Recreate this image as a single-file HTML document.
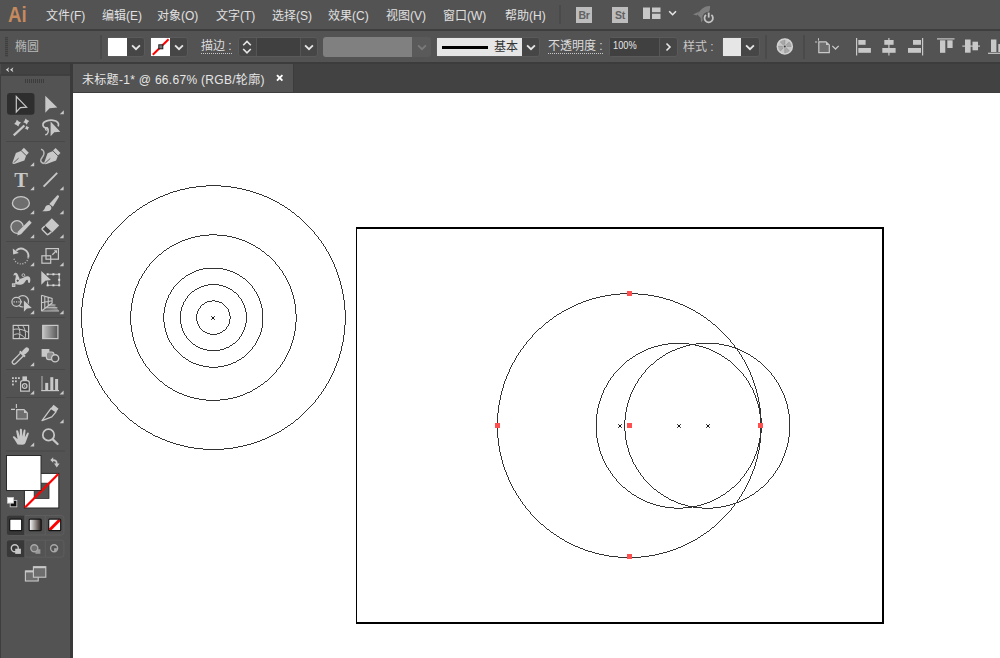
<!DOCTYPE html>
<html lang="zh-CN">
<head>
<meta charset="utf-8">
<title>未标题-1* @ 66.67% (RGB/轮廓)</title>
<style>
*{box-sizing:border-box;margin:0;padding:0}
html,body{width:1000px;height:658px;overflow:hidden;background:#fff}
body{position:relative;font-family:"Liberation Sans","Noto Sans CJK SC",sans-serif;font-size:12px;color:#dcdcdc}
.abs{position:absolute}
#menubar{position:absolute;left:0;top:0;width:1000px;height:29px;background:#535353}
#menusep{position:absolute;left:0;top:29px;width:1000px;height:2px;background:#3e3e3e}
#ctrl{position:absolute;left:0;top:31px;width:1000px;height:31px;background:#535353}
#ctrlsep{position:absolute;left:0;top:62px;width:1000px;height:2px;background:#3c3c3c}
#tools{position:absolute;left:0;top:63px;width:70px;height:595px;background:#535353}
#toolshead{position:absolute;left:0;top:0;width:70px;height:12px;background:#424242}
#gap{position:absolute;left:70px;top:63px;width:3px;height:595px;background:#3a3a3a}
#tabbar{position:absolute;left:73px;top:64px;width:927px;height:29px;background:#424242;border-bottom:1px solid #3e3e3e}
#tab{position:absolute;left:0;top:0;width:221px;height:28px;background:#535353;border-right:1px solid #3c3c3c}
#canvas{position:absolute;left:73px;top:93px;width:927px;height:565px;background:#fff}
.mi{position:absolute;top:6.5px;height:18px;line-height:18px;font-size:12px;color:#e0e0e0;white-space:nowrap}
#logo{position:absolute;left:8px;top:0.5px;font-size:21.5px;line-height:28px;font-weight:bold;color:#c58a5e;transform-origin:0 50%;transform:scaleX(.87)}

.sep{position:absolute;top:4px;width:2px;height:24px;background:#4a4a4a}
.dd{position:absolute;top:6px;height:20px;background:#464646;border:1px solid #5a5a5a}
.sw{position:absolute;top:7px;height:18px}
.lbl{position:absolute;top:6px;line-height:18px;font-size:12px;color:#dcdcdc;white-space:nowrap}
.ul{border-bottom:1px dotted #c8c8c8;line-height:14px;padding-bottom:0}
svg{display:block}
</style>
</head>
<body>
<div id="menubar">
  <div id="logo">Ai</div>
  <div class="mi" style="left:46px">文件(F)</div>
  <div class="mi" style="left:102px">编辑(E)</div>
  <div class="mi" style="left:157px">对象(O)</div>
  <div class="mi" style="left:216px">文字(T)</div>
  <div class="mi" style="left:272px">选择(S)</div>
  <div class="mi" style="left:328px">效果(C)</div>
  <div class="mi" style="left:386px">视图(V)</div>
  <div class="mi" style="left:443px">窗口(W)</div>
  <div class="mi" style="left:505px">帮助(H)</div>
  
<div class="abs" style="left:559px;top:5px;width:2px;height:19px;background:#4a4a4a"></div>
<div class="abs" style="left:576px;top:7px;width:16px;height:16px;background:#bdbdbd;color:#626262;font-size:10.5px;font-weight:bold;line-height:16px;text-align:center;letter-spacing:-0.3px">Br</div>
<div class="abs" style="left:612px;top:7px;width:16px;height:16px;background:#bdbdbd;color:#626262;font-size:10.5px;font-weight:bold;line-height:16px;text-align:center;letter-spacing:-0.3px">St</div>
<svg class="abs" style="left:643px;top:7px" width="18" height="13" viewBox="0 0 18 13"><rect x="0" y="0.5" width="7" height="11.5" fill="#c8c8c8"/><rect x="9" y="0.5" width="8.5" height="4.7" fill="#c8c8c8"/><rect x="9" y="6.7" width="8.5" height="5.3" fill="#c8c8c8"/></svg>
<svg class="abs" style="left:668px;top:10px" width="10" height="7" viewBox="0 0 10 7"><path d="M1.2 1.3 L4.6 4.7 L8 1.3" fill="none" stroke="#e6e6e6" stroke-width="1.6"/></svg>
<svg class="abs" style="left:691px;top:4px" width="24" height="20" viewBox="691 4 24 20"><g fill="#7e7e7e"><path d="M710 6 C710.6 10.5 707.5 15.5 701.6 19 L697.4 14.6 C700.5 9 705.5 5.6 710 6 Z"/><path d="M699.2 11.6 L693 14.4 L697 15.6 Z"/><path d="M704.6 17.4 L701.2 22.4 L700.6 18.6 Z"/></g><circle cx="708.7" cy="18" r="6.3" fill="#535353"/><path d="M706 14.9 A4.2 4.2 0 1 0 711.4 14.9" fill="none" stroke="#c4c4c4" stroke-width="1.8"/><path d="M708.7 12.6 V17.6" stroke="#c4c4c4" stroke-width="1.8"/></svg>

</div>
<div id="menusep"></div>
<div id="ctrl">

<div class="abs" style="left:5px;top:6px;width:3px;height:20px;background:repeating-linear-gradient(#404040 0 1px,#4c4c4c 1px 2px)"></div>
<div class="lbl" style="left:15px;top:6.5px;color:#b8b8b8">椭圆</div>
<div class="sep" style="left:99.5px"></div>
<div class="dd" style="left:107px;width:38px;border-radius:3px"></div>
<div class="sw" style="left:108px;width:19px;background:#fff"></div>
<svg class="abs" style="left:131px;top:13px" width="10" height="7" viewBox="0 0 10 7"><path d="M1.1 1.3 L5 5.2 L8.9 1.3" fill="none" stroke="#e6e6e6" stroke-width="1.8"/></svg>
<div class="dd" style="left:150px;width:38px;border-radius:3px"></div>
<svg class="abs" style="left:151px;top:7px" width="19" height="18" viewBox="0 0 19 18"><rect width="19" height="18" fill="#fff"/><path d="M1.8 16.8 L17.6 1.2" stroke="#f00" stroke-width="2"/><rect x="7.8" y="6.8" width="4" height="4" fill="#777" stroke="#222" stroke-width="1"/></svg>
<svg class="abs" style="left:174px;top:13px" width="10" height="7" viewBox="0 0 10 7"><path d="M1.1 1.3 L5 5.2 L8.9 1.3" fill="none" stroke="#e6e6e6" stroke-width="1.8"/></svg>
<div class="lbl ul" style="left:201px;top:8px">描边 :</div>
<div class="dd" style="left:238px;width:80px;border-radius:3px"></div>
<div class="abs" style="left:256px;top:7px;width:45px;height:18px;background:#404040;border-left:1px solid #555;border-right:1px solid #555"></div>
<svg class="abs" style="left:242px;top:9px" width="10" height="14" viewBox="0 0 10 14"><path d="M1.2 5.2 L5 1.4 L8.8 5.2 M1.2 9 L5 12.8 L8.8 9" fill="none" stroke="#e6e6e6" stroke-width="1.6"/></svg>
<svg class="abs" style="left:304px;top:13px" width="10" height="7" viewBox="0 0 10 7"><path d="M1.1 1.3 L5 5.2 L8.9 1.3" fill="none" stroke="#e6e6e6" stroke-width="1.8"/></svg>
<div class="abs" style="left:323px;top:6px;width:89px;height:20px;background:#808080;border-radius:3px 0 0 3px"></div>
<div class="abs" style="left:412px;top:6px;width:19px;height:20px;background:#5a5a5a;border-radius:0 3px 3px 0"></div>
<svg class="abs" style="left:417px;top:13px" width="10" height="7" viewBox="0 0 10 7"><path d="M1.1 1.3 L5 5.2 L8.9 1.3" fill="none" stroke="#7a7a7a" stroke-width="1.8"/></svg>
<div class="dd" style="left:436px;width:104px;border-radius:3px"></div>
<div class="abs" style="left:437px;top:7px;width:85px;height:18px;background:#e6e6e6"></div>
<div class="abs" style="left:442px;top:14.5px;width:46px;height:3px;background:#000"></div>
<div class="abs" style="left:494px;top:7px;line-height:18px;font-size:12px;color:#333">基本</div>
<svg class="abs" style="left:526px;top:13px" width="10" height="7" viewBox="0 0 10 7"><path d="M1.1 1.3 L5 5.2 L8.9 1.3" fill="none" stroke="#e6e6e6" stroke-width="1.8"/></svg>
<div class="lbl ul" style="left:548px;top:8px">不透明度 :</div>
<div class="dd" style="left:609px;width:69px;border-radius:3px"></div>
<div class="abs" style="left:610px;top:7px;width:50px;height:18px;background:#404040;border-right:1px solid #555"></div>
<div class="abs" style="left:613px;top:6px;line-height:16px;font-size:10.5px;color:#e6e6e6;transform-origin:0 50%;transform:scaleX(.88)">100%</div>
<svg class="abs" style="left:665px;top:11px" width="7" height="10" viewBox="0 0 7 10"><path d="M1.5 1.5 L5 5 L1.5 8.5" fill="none" stroke="#e6e6e6" stroke-width="1.6"/></svg>
<div class="lbl" style="left:683px;top:7px;color:#c8c8c8">样式 :</div>
<div class="dd" style="left:722px;width:38px;border-radius:3px"></div>
<div class="sw" style="left:723px;width:18px;background:#e6e6e6"></div>
<svg class="abs" style="left:745px;top:13px" width="10" height="7" viewBox="0 0 10 7"><path d="M1.1 1.3 L5 5.2 L8.9 1.3" fill="none" stroke="#e6e6e6" stroke-width="1.8"/></svg>
<div class="sep" style="left:765px"></div>
<div class="sep" style="left:803px"></div>

<svg class="abs" style="left:775px;top:6px" width="20" height="20" viewBox="0 0 20 20"><circle cx="9.8" cy="9.4" r="7.6" fill="#a8a8a8"/><g fill="#c6c6c6"><path d="M9.8 9.4 L9.8 1.8 A7.6 7.6 0 0 1 15.2 4 Z"/><path d="M9.8 9.4 L17.4 9.4 A7.6 7.6 0 0 1 15.2 14.8 Z"/><path d="M9.8 9.4 L9.8 17 A7.6 7.6 0 0 1 4.4 14.8 Z"/><path d="M9.8 9.4 L2.2 9.4 A7.6 7.6 0 0 1 4.4 4 Z"/></g><g stroke="#8a8a8a" stroke-width=".6"><path d="M9.8 1.8 V17 M2.2 9.4 H17.4 M4.4 4 L15.2 14.8 M15.2 4 L4.4 14.8"/></g><circle cx="9.8" cy="9.4" r="7.5" fill="none" stroke="#d2d2d2" stroke-width="1.5"/><circle cx="9.8" cy="9.4" r="2" fill="#c0c0c0"/><circle cx="9.8" cy="9.4" r="1" fill="#3a3a3a"/></svg>
<svg class="abs" style="left:814px;top:6px" width="28" height="18" viewBox="814 37 28 18"><path d="M818.5 38.2 V40.6 M815 42 H817.2" stroke="#c8c8c8" stroke-width="1"/><path d="M818.8 41.8 H826 L829.3 45.1 V52.7 H818.8 Z" fill="#6e6e6e" stroke="#c8c8c8" stroke-width="1.2"/><path d="M826 41.8 V45.1 H829.3 Z" fill="#c8c8c8"/><path d="M832.3 45.9 L835.5 49 L838.7 45.9" fill="none" stroke="#c8c8c8" stroke-width="1.3"/></svg>
<svg class="abs" style="left:850px;top:5px" width="150" height="22" viewBox="850 36 150 22" fill="#c8c8c8">
<rect x="856" y="38" width="1.2" height="17.5"/><rect x="858.3" y="40" width="7.3" height="4.8"/><rect x="858.3" y="48" width="12.6" height="4.8"/>
<rect x="888.3" y="38" width="1.2" height="17.5"/><rect x="884.3" y="40" width="9.3" height="4.8"/><rect x="882.3" y="48" width="13.3" height="4.8"/>
<rect x="922" y="38" width="1.2" height="17.5"/><rect x="913" y="40" width="8" height="4.8"/><rect x="908" y="48" width="13" height="4.8"/>
<rect x="937" y="38.3" width="17.5" height="1.2"/><rect x="940" y="40.3" width="5.3" height="12.5"/><rect x="947.3" y="40.3" width="5.3" height="7.7"/>
<rect x="962.3" y="45.5" width="17.7" height="1.2"/><rect x="965" y="39.5" width="5.6" height="13.2"/><rect x="972.5" y="41.7" width="5.5" height="8.6"/>
<rect x="988" y="52.7" width="12" height="1.2"/><rect x="991" y="39.5" width="5.4" height="12.5"/><rect x="998.3" y="44" width="3" height="8"/>
</svg>


</div>
<div id="ctrlsep"></div>
<div id="tools">
  <div id="toolshead"></div>
<!--TOOLS-START-->
<svg class="abs" style="left:0;top:0" width="70" height="595" viewBox="0 63 70 595">
<defs>
<path id="tri" d="M0 -4 V0 H-4 Z" fill="#c8c8c8"/>
<g id="pen"><path d="M12.5 162.4 L15.9 153 L21.4 150.7 L26.2 155.5 L24.4 160.4 L14.2 164 C13 164.2 12.3 163.4 12.5 162.4 Z" fill="#c8c8c8"/><path d="M21.3 150.4 L23.9 147.8 L28.8 152.7 L26.3 155.3 Z" fill="#c8c8c8"/><path d="M21.2 150.7 L26.2 155.7" stroke="#535353" stroke-width=".8"/><path d="M13.6 162.8 L18.6 158.2" stroke="#535353" stroke-width=".9"/></g>
<linearGradient id="gr1" x1="0" x2="1" y1="0" y2="0"><stop offset="0" stop-color="#c4c4c4"/><stop offset="1" stop-color="#555"/></linearGradient>
<linearGradient id="gr2" x1="0" x2="1" y1="0" y2="0"><stop offset="0" stop-color="#fff"/><stop offset="1" stop-color="#2a1f1c"/></linearGradient>
<linearGradient id="gr3" x1="0" x2="1" y1="0" y2="0"><stop offset="0" stop-color="#555"/><stop offset="1" stop-color="#aaa"/></linearGradient>
</defs>
<!-- header -->
<path d="M9.2 67.2 L5.8 69.7 L9.2 72.2 L8.2 69.7 Z M13.4 67.2 L10 69.7 L13.4 72.2 L12.4 69.7 Z" fill="#d4d4d4"/><rect x="0" y="63" width="70" height="1" fill="#3a3a3a"/><rect x="0" y="64" width="1" height="10.5" fill="#4c4c4c"/><rect x="0" y="76" width="1" height="582" fill="#3e3e3e"/>
<rect x="0" y="74.5" width="70" height="1.2" fill="#3a3a3a"/>
<path d="M25.5 79 V83 M27.5 79 V83 M29.5 79 V83 M31.5 79 V83 M33.5 79 V83 M35.5 79 V83 M37.5 79 V83 M39.5 79 V83 M41.5 79 V83 M43.5 79 V83" stroke="#3c3c3c" stroke-width="1"/>
<!-- row 1 -->
<rect x="7" y="93" width="27.5" height="21.7" rx="3" fill="#2e2e2e"/>
<path d="M16.3 96.5 V112 L20.4 107.6 L26.6 107.2 Z" fill="none" stroke="#c8c8c8" stroke-width="1.2" stroke-linejoin="miter"/>
<path d="M45.3 95.8 V112.8 L49.6 108.2 L57.3 107.5 Z" fill="#c8c8c8"/>
<use href="#tri" x="63.8" y="114.2"/>
<!-- wand -->
<path d="M13.7 135.4 L24.4 125.5" stroke="#c8c8c8" stroke-width="2.2"/>
<g fill="#c8c8c8"><path d="M17.6 119.7 Q18.720000000000002 122.08 21.1 123.2 Q18.720000000000002 124.32000000000001 17.6 126.7 Q16.48 124.32000000000001 14.100000000000001 123.2 Q16.48 122.08 17.6 119.7 Z" transform="rotate(-12 17.6 123.2)"/><path d="M26.2 118.5 Q27.192 120.60799999999999 29.3 121.6 Q27.192 122.592 26.2 124.69999999999999 Q25.208 122.592 23.099999999999998 121.6 Q25.208 120.60799999999999 26.2 118.5 Z" transform="rotate(-12 26.2 121.6)"/><path d="M27 125.8 Q27.704 127.296 29.2 128 Q27.704 128.704 27 130.2 Q26.296 128.704 24.8 128 Q26.296 127.296 27 125.8 Z" transform="rotate(-12 27 128)"/></g>
<!-- lasso -->
<path d="M48 128.4 C44.6 128.2 42.4 126.4 43 124 C43.8 120.9 49 119.9 53 120.3 C57.4 120.8 59.4 123.4 58.2 126.4" fill="none" stroke="#c8c8c8" stroke-width="1.7"/>
<circle cx="46.6" cy="128.8" r="1.3" fill="none" stroke="#c8c8c8" stroke-width="1.1"/>
<path d="M48 128.6 C48.6 131 48.2 134.8 45.2 134.8" fill="none" stroke="#c8c8c8" stroke-width="1.4"/>
<path d="M50.6 121.5 V136.3 L54.3 132.3 L60.3 131.7 Z" fill="#c8c8c8"/>
<rect x="6" y="141" width="59" height="1" fill="#484848"/>
<!-- pens -->
<use href="#pen"/>
<use href="#tri" x="34.2" y="166.3"/>
<use href="#pen" x="31.7" y="0.2"/>
<path d="M41 149.3 C43.5 150 44.6 152 43.6 155 C42.6 157.6 40.2 158.8 40.7 160.8 C41.2 162.8 42.6 163.3 44.4 163.4" fill="none" stroke="#b8b8b8" stroke-width="1.5"/>
<!-- T and line -->
<text x="21.1" y="186.9" text-anchor="middle" font-family="'Liberation Serif',serif" font-size="20.5" font-weight="bold" fill="#c8c8c8">T</text>
<use href="#tri" x="34.2" y="190.3"/>
<path d="M43.6 186.6 L57.2 172.9" stroke="#c8c8c8" stroke-width="1.9"/>
<use href="#tri" x="63.6" y="190.3"/>
<!-- ellipse and brush -->
<ellipse cx="20.9" cy="203.2" rx="8.5" ry="6.5" fill="#6e6e6e" stroke="#c8c8c8" stroke-width="1.3"/>
<use href="#tri" x="34.2" y="214.2"/>
<path d="M57.1 195.5 C58.2 194.8 59.4 195.8 58.9 197 L52.9 206.8 L49.3 204.1 Z" fill="#c8c8c8"/>
<path d="M49 205 C50.5 205.6 51.6 206.7 51.4 208.3 C51 210.8 48.5 211.4 46 211.3 L42.2 211.3 C44.5 210 44.6 208.6 45.3 207 C46 205.3 47.6 204.6 49 205 Z" fill="#c8c8c8"/>
<use href="#tri" x="63.6" y="214.2"/>
<!-- shaper and eraser -->
<path d="M18.6 233.2 C14.5 234 10.9 231 10.9 226.8 C10.9 223.4 13.6 220.7 17 220.7 C20.4 220.7 23.1 223.4 23.1 226.3" fill="#6e6e6e" stroke="#c8c8c8" stroke-width="1.3"/>
<path d="M17.3 235.6 L18 231.4 L29.3 220.3 L31.7 222.7 L21 234.2 Z" fill="#c8c8c8"/>
<use href="#tri" x="34.2" y="238.2"/>
<path d="M51.8 218.2 L59.2 225.6 L52.2 232.6 L44.8 225.2 Z" fill="#c8c8c8"/>
<path d="M44.8 226 L42.4 228.4 C42 228.8 42 229.4 42.4 229.8 L46.9 234.3 C47.3 234.7 47.9 234.7 48.3 234.3 L51.4 231.8" fill="#454545" stroke="#c8c8c8" stroke-width="1.5"/>
<use href="#tri" x="63.6" y="238.2"/>
<rect x="6" y="241" width="59" height="1" fill="#484848"/>
<!-- rotate & scale -->
<path d="M16.2 250.6 A7.3 7.3 0 0 1 28.2 257.6" fill="none" stroke="#c8c8c8" stroke-width="1.9"/>
<path d="M12.8 248.6 L13.2 254.6 L18.8 253 Z" fill="#c8c8c8"/>
<path d="M28.2 257.6 A7.3 7.3 0 0 1 13.8 258" fill="none" stroke="#b4b4b4" stroke-width="1.4" stroke-dasharray="1.1 1.5"/>
<use href="#tri" x="34.2" y="266.3"/>
<rect x="46" y="248.6" width="12.4" height="10.6" fill="none" stroke="#c8c8c8" stroke-width="1.2"/>
<rect x="41.9" y="255.8" width="8.8" height="7.4" fill="none" stroke="#c8c8c8" stroke-width="1.2"/>
<path d="M52.3 254.8 L56 251.1" stroke="#c8c8c8" stroke-width="1.3"/><path d="M53.8 250.2 H57 V253.4 Z" fill="#c8c8c8"/>
<use href="#tri" x="63.6" y="266.3"/>
<!-- width & free transform -->
<path d="M13.7 276 C13.2 273.6 14.6 272.6 15.8 272.7 C17.6 272.9 18 275 18.6 276.4 C19.2 277.8 20 278.6 21.2 278.4 C23.6 278 25.2 275.8 27.8 276.2 C30.7 276.6 30.8 280.4 29.9 282.6 C29.5 283.3 28.3 283.1 28.1 282.2 C28.1 280.8 27.9 279.7 27 279.8 C25.4 280 25.4 283 22.4 284.2 C19.8 285.2 17 284.8 15.2 284 C15.6 282.4 15 281.4 15.2 279.6 C15.4 277.8 16.2 276.6 15.6 275.4 C15.2 274.6 14.2 275 13.7 276 Z" fill="#c8c8c8"/>
<path d="M18.6 279.8 L22.6 276" stroke="#535353" stroke-width=".9"/>
<circle cx="23.4" cy="275.2" r="1.4" fill="#535353" stroke="#c8c8c8" stroke-width=".9"/>
<circle cx="17.7" cy="280.7" r="1.6" fill="#505050" stroke="#e4e4e4" stroke-width=".9"/>
<path d="M14.6 284 L16.6 281.8" stroke="#c8c8c8" stroke-width=".8"/>
<rect x="12.3" y="283.8" width="2.7" height="2.8" fill="#a0a0a0" stroke="#d6d6d6" stroke-width=".8"/>
<use href="#tri" x="34.2" y="290.3"/>
<path d="M41.3 271 V284.8 L45.3 280.8 L51 280.1 Z" fill="#c8c8c8"/>
<path d="M47.6 274.3 H59.2 V285.3 H47.6 V281.5" fill="none" stroke="#c8c8c8" stroke-width="1.1"/>
<g fill="#dcdcdc"><rect x="46.6" y="273.3" width="2" height="2"/><rect x="52.4" y="273.3" width="2" height="2"/><rect x="58.2" y="273.3" width="2" height="2"/><rect x="58.2" y="278.8" width="2" height="2"/><rect x="58.2" y="284.3" width="2" height="2"/><rect x="52.4" y="284.3" width="2" height="2"/><rect x="46.6" y="284.3" width="2" height="2"/></g>
<!-- shape builder & perspective -->
<circle cx="22.8" cy="301.3" r="5.7" fill="none" stroke="#c8c8c8" stroke-width="1.2"/>
<circle cx="16.4" cy="301.8" r="4.5" fill="#535353" stroke="#c8c8c8" stroke-width="1.2"/>
<path d="M13.6 301.8 H23.4" stroke="#c8c8c8" stroke-width="1.2" stroke-dasharray="1.2 1.2"/>
<path d="M23.9 300.4 V311.8 L27 308.5 L31.8 307.9 Z" fill="#c8c8c8" stroke="#535353" stroke-width="1" paint-order="stroke"/>
<use href="#tri" x="34.2" y="314.2"/>
<path d="M41.5 310.8 L52 302.6 L59 310.8 Z" fill="url(#gr3)" opacity=".7"/>
<path d="M41.5 295.2 V311 M41.5 295.2 L52.1 298.5 V303 M41.5 302.8 L52.1 300.7 M41.5 311 L52.1 303 M44.8 296.2 V308.4 M48.2 297.3 V305.8" fill="none" stroke="#c8c8c8" stroke-width="1.1"/>
<path d="M41.5 311 H59 M46 307.7 H57.4 M49.4 305 H55.6" stroke="#c8c8c8" stroke-width=".9"/>
<use href="#tri" x="63.6" y="314.2"/>
<rect x="6" y="317" width="59" height="1" fill="#484848"/>
<!-- mesh & gradient -->
<rect x="13.2" y="325.4" width="15.4" height="13.2" fill="#4a4a4a" stroke="#c8c8c8" stroke-width="1.2"/>
<path d="M17.5 325.4 C20 329 20.5 334 19 338.6 M22.5 325.4 C25.5 329 26 334 25 338.6 M13.2 329.6 C18 328 24 330 28.6 332.4 M13.2 335.4 C17 332.6 21 333.6 25.4 338.6" fill="none" stroke="#c8c8c8" stroke-width="1"/>
<rect x="42.7" y="325.4" width="15.2" height="13.2" fill="url(#gr1)" stroke="#c8c8c8" stroke-width="1.2"/>
<!-- eyedropper & blend -->
<g transform="translate(13.1 363.3) rotate(45)"><path d="M-2 -12.4 V-2 C-2 -0.4 -1 0.4 0 0.4 C1 0.4 2 -0.4 2 -2 V-12.4" fill="#535353" stroke="#c8c8c8" stroke-width="1.3"/><rect x="-3.7" y="-14.2" width="7.4" height="2.2" rx=".6" fill="#c8c8c8"/><rect x="-2.3" y="-21.6" width="4.6" height="8" rx="2.2" fill="#c8c8c8"/></g>
<use href="#tri" x="34.2" y="366.2"/>
<rect x="41.6" y="349" width="7.8" height="7.8" fill="#c8c8c8"/>
<rect x="46.4" y="352" width="7.6" height="7.6" rx="2.4" fill="#8a8a8a" stroke="#c8c8c8" stroke-width="1.2"/>
<circle cx="55.1" cy="358.3" r="3.6" fill="#535353" stroke="#c8c8c8" stroke-width="1.4"/>
<rect x="6" y="369" width="59" height="1" fill="#484848"/>
<!-- sprayer & graph -->
<g fill="#c8c8c8"><rect x="12" y="377.2" width="1.8" height="1.8"/><rect x="15" y="377.2" width="1.8" height="1.8"/><rect x="18" y="377.2" width="1.8" height="1.8"/><rect x="12" y="380.4" width="1.8" height="1.8"/><rect x="15" y="380.4" width="1.8" height="1.8"/><rect x="12" y="383.6" width="1.8" height="1.8"/><rect x="22.4" y="376.4" width="4.6" height="3.6"/></g>
<path d="M20.6 391.2 V382.8 C20.6 381.4 21.6 380.6 22.8 380.6 H27 C28.4 380.6 29.3 381.6 29.3 382.8 V391.2 Z" fill="#3e3e3e" stroke="#c8c8c8" stroke-width="1.2"/>
<circle cx="24.7" cy="386" r="2.3" fill="none" stroke="#c8c8c8" stroke-width="1.3"/><circle cx="24.7" cy="386" r=".7" fill="#c8c8c8"/>
<use href="#tri" x="34.2" y="394.6"/>
<rect x="41.3" y="376" width="1.4" height="15" fill="#9a9a9a"/><rect x="41.3" y="390" width="17.7" height="1.2" fill="#c8c8c8"/>
<rect x="45.2" y="382.9" width="3" height="7.2" fill="#c8c8c8"/><rect x="50.3" y="377.2" width="3" height="13" fill="#c8c8c8"/><rect x="55.1" y="379" width="3" height="11.2" fill="#c8c8c8"/>
<use href="#tri" x="63.6" y="394.6"/>
<rect x="6" y="397" width="59" height="1" fill="#484848"/>
<!-- artboard & slice -->
<path d="M16.4 404 V408 M11 409.4 H15" stroke="#c8c8c8" stroke-width="1.1"/>
<path d="M16.7 409.7 H24 L27.3 413 V419 H16.7 Z" fill="#6e6e6e" stroke="#c8c8c8" stroke-width="1.2"/>
<path d="M24 409.7 V413 H27.3 Z" fill="#c8c8c8"/>
<path d="M51 408.4 L42 420.6 L51.8 416.8 L56 411.8 Z" fill="#4c4c4c" stroke="#c8c8c8" stroke-width="1.3" stroke-linejoin="round"/>
<path d="M53.6 404.8 L58.5 408.8 L56 412 L50.8 408.2 Z" fill="#c8c8c8"/>
<use href="#tri" x="63.6" y="423.2"/>
<!-- hand & zoom -->
<path d="M17.6 444.6 C16.5 443 14.8 439.6 13 437.6 C12.4 436.8 13.2 435.8 14.2 436.3 C15.6 437 16.6 438.4 17.6 439 L16.2 431.4 C16 430 17.8 429.7 18.2 431 L19.8 436.6 L19.8 429.6 C19.8 428.3 21.8 428.3 21.9 429.6 L22.4 436.4 L23.6 430.4 C23.9 429.1 25.7 429.5 25.5 430.8 L24.9 437.2 L27 433.2 C27.6 432 29.2 432.8 28.7 434 C27.6 437 26.6 440 25.6 442.6 C25 444.2 24 444.8 22.4 444.8 Z" fill="#c8c8c8"/>
<use href="#tri" x="34.2" y="446.6"/>
<circle cx="48.5" cy="434.9" r="5.7" fill="none" stroke="#c8c8c8" stroke-width="1.7"/>
<path d="M52.8 439.4 L57.6 444" stroke="#c8c8c8" stroke-width="2.2" stroke-linecap="round"/>
<rect x="6" y="450.5" width="59" height="1" fill="#484848"/>
<!-- fill/stroke -->
<rect x="24.4" y="473.4" width="34.4" height="34.6" fill="#fff" stroke="#2a2a2a" stroke-width="1"/>
<rect x="34.2" y="483.2" width="14.8" height="15.2" fill="#535353" stroke="#2a2a2a" stroke-width=".8"/>
<path d="M25 507.5 L58.3 474" stroke="#f00" stroke-width="2.2"/>
<rect x="6.5" y="455.5" width="34.5" height="35" fill="#fff" stroke="#2a2a2a" stroke-width="1"/>
<path d="M50.3 460 L53.2 457.3 V459.2 C56 459.2 57.6 460.6 57.6 463.4 H59.6 L56.8 467.4 L54 463.4 H55.8 C55.8 461.6 55 460.9 53.2 460.9 V462.7 Z" fill="#c8c8c8"/>
<rect x="10.2" y="500.4" width="6.6" height="6.4" fill="#111" stroke="#c8c8c8" stroke-width=".9"/>
<rect x="7.5" y="497.5" width="6" height="5.6" fill="#fff" stroke="#c8c8c8" stroke-width=".9"/>
<!-- color mode row -->
<rect x="6.7" y="515.5" width="57.2" height="19.5" rx="2.5" fill="none" stroke="#5e5e5e" stroke-width="1"/>
<path d="M9.2 515.5 H24.9 V535 H9.2 A2.5 2.5 0 0 1 6.7 532.5 V518 A2.5 2.5 0 0 1 9.2 515.5 Z" fill="#383838"/>
<path d="M24.9 515.5 V535 M45.3 515.5 V535" stroke="#5e5e5e" stroke-width="1"/>
<rect x="9.7" y="519.1" width="12" height="11.6" rx="1" fill="#fff" stroke="#141414" stroke-width="1.2"/>
<rect x="29.2" y="519.1" width="12" height="11.6" rx="1" fill="url(#gr2)" stroke="#141414" stroke-width="1.2"/>
<rect x="48.7" y="519.1" width="12" height="11.6" rx="1" fill="#fff"/>
<path d="M49.6 530 L59.8 519.8" stroke="#f00" stroke-width="3"/>
<rect x="48.7" y="519.1" width="12" height="11.6" rx="1" fill="none" stroke="#141414" stroke-width="1.2"/>
<!-- draw mode row -->
<rect x="6.7" y="540.2" width="57.2" height="17" rx="2.5" fill="none" stroke="#5e5e5e" stroke-width="1"/>
<path d="M9.2 540.2 H24.9 V557.2 H9.2 A2.5 2.5 0 0 1 6.7 554.7 V542.7 A2.5 2.5 0 0 1 9.2 540.2 Z" fill="#383838"/>
<path d="M24.9 540.2 V557.2 M45.3 540.2 V557.2" stroke="#5e5e5e" stroke-width="1"/>
<circle cx="14.8" cy="548.2" r="3.5" fill="none" stroke="#c8c8c8" stroke-width="1.4"/><rect x="15.2" y="548.7" width="5.7" height="5.2" fill="#c8c8c8"/>
<rect x="35.4" y="549.2" width="5" height="4.6" fill="#9a9a9a"/><circle cx="34.3" cy="548.2" r="3.5" fill="#707070" stroke="#a8a8a8" stroke-width="1.4"/>
<circle cx="54.1" cy="548.2" r="3.5" fill="none" stroke="#a8a8a8" stroke-width="1.4"/><path d="M54.1 548.2 H57 A3 3 0 0 1 54.1 551.2 Z" fill="#a8a8a8"/>
<!-- screen mode -->
<rect x="25.4" y="571" width="12.8" height="10" fill="#6e6e6e" stroke="#c8c8c8" stroke-width="1.1"/><rect x="25.4" y="570.6" width="12.8" height="1.8" fill="#c8c8c8"/>
<rect x="33.4" y="566.8" width="12.4" height="10.4" fill="#6e6e6e" stroke="#c8c8c8" stroke-width="1.1"/><rect x="33.4" y="566.4" width="12.4" height="1.8" fill="#c8c8c8"/>
</svg>
<!--TOOLS-END-->
</div>
<div id="gap"></div>
<div id="tabbar">
  <div id="tab"></div>
  <div class="abs" style="left:9px;top:6.5px;line-height:18px;font-size:12px;color:#e6e6e6;white-space:nowrap;letter-spacing:.3px">未标题-1* @ 66.67% (RGB/轮廓)</div>
  <svg class="abs" style="left:202px;top:9px" width="10" height="10" viewBox="0 0 10 10"><path d="M2 2.2 L7.4 7.6 M7.4 2.2 L2 7.6" stroke="#fff" stroke-width="1.9"/></svg>
</div>
<div id="canvas">
<svg width="927" height="565" viewBox="73 93 927 565" style="position:absolute;left:0;top:0" fill="none" stroke="#333" stroke-width="1" shape-rendering="crispEdges">
  <!-- artboard -->
  <path d="M356.5 227 V623" stroke="#000" stroke-width="1"/>
  <path d="M356 228 H884" stroke="#000" stroke-width="2"/>
  <path d="M883.3 227 V623.5" stroke="#000" stroke-width="2.2"/>
  <path d="M356 622.5 H884" stroke="#000" stroke-width="2"/>
  <!-- circles (pixel outlines) -->
  <path id="circ" fill="#333" stroke="none" d="M206 185h15v1h-15zM196 186h10v1h-10zM221 186h10v1h-10zM189 187h7v1h-7zM231 187h6v1h-6zM185 188h4v1h-4zM237 188h5v1h-5zM180 189h5v1h-5zM242 189h4v1h-4zM177 190h3v1h-3zM246 190h4v1h-4zM173 191h4v1h-4zM250 191h3v1h-3zM170 192h3v1h-3zM253 192h3v1h-3zM168 193h2v1h-2zM256 193h3v1h-3zM165 194h3v1h-3zM259 194h3v1h-3zM163 195h2v1h-2zM262 195h2v1h-2zM160 196h3v1h-3zM264 196h3v1h-3zM158 197h2v1h-2zM267 197h2v1h-2zM156 198h2v1h-2zM269 198h2v1h-2zM154 199h2v1h-2zM271 199h2v1h-2zM152 200h2v1h-2zM273 200h2v1h-2zM150 201h2v1h-2zM275 201h2v1h-2zM148 202h2v1h-2zM277 202h2v1h-2zM145 204h2v1h-2zM280 204h2v1h-2zM143 205h2v1h-2zM282 205h2v1h-2zM140 207h2v1h-2zM285 207h2v1h-2zM137 209h2v1h-2zM288 209h2v1h-2zM133 212h2v1h-2zM292 212h2v1h-2zM129 215h2v1h-2zM297 216h2v1h-2zM122 413h2v1h-2zM296 419h2v1h-2zM130 420h2v1h-2zM134 423h2v1h-2zM291 423h2v1h-2zM288 425h2v1h-2zM138 426h2v1h-2zM285 427h2v1h-2zM141 428h2v1h-2zM143 429h2v1h-2zM282 429h2v1h-2zM146 431h2v1h-2zM279 431h2v1h-2zM148 432h2v1h-2zM277 432h2v1h-2zM150 433h2v1h-2zM275 433h2v1h-2zM273 434h2v1h-2zM153 435h2v1h-2zM271 435h2v1h-2zM155 436h3v1h-3zM269 436h2v1h-2zM158 437h2v1h-2zM267 437h2v1h-2zM160 438h2v1h-2zM265 438h2v1h-2zM162 439h3v1h-3zM262 439h3v1h-3zM165 440h2v1h-2zM260 440h2v1h-2zM167 441h3v1h-3zM257 441h3v1h-3zM170 442h3v1h-3zM254 442h3v1h-3zM173 443h3v1h-3zM251 443h3v1h-3zM176 444h4v1h-4zM247 444h4v1h-4zM180 445h4v1h-4zM243 445h4v1h-4zM184 446h4v1h-4zM238 446h5v1h-5zM188 447h6v1h-6zM233 447h5v1h-5zM194 448h9v1h-9zM224 448h9v1h-9zM203 449h21v1h-21zM81 307h1v21h-1zM82 298h1v9h-1zM82 328h1v9h-1zM83 293h1v5h-1zM83 337h1v6h-1zM84 288h1v5h-1zM84 343h1v4h-1zM85 284h1v4h-1zM85 347h1v4h-1zM86 280h1v4h-1zM86 351h1v4h-1zM87 277h1v3h-1zM87 355h1v3h-1zM88 274h1v3h-1zM88 358h1v3h-1zM89 271h1v3h-1zM89 361h1v3h-1zM90 269h1v2h-1zM90 364h1v2h-1zM91 266h1v3h-1zM91 366h1v3h-1zM92 264h1v2h-1zM92 369h1v2h-1zM93 262h1v2h-1zM93 371h1v2h-1zM94 260h1v2h-1zM94 373h1v3h-1zM95 258h1v2h-1zM95 376h1v2h-1zM96 256h1v2h-1zM96 378h1v1h-1zM97 254h1v2h-1zM97 379h1v2h-1zM98 252h1v2h-1zM98 381h1v2h-1zM99 250h1v2h-1zM99 383h1v2h-1zM100 249h1v1h-1zM100 385h1v1h-1zM101 247h1v2h-1zM101 386h1v2h-1zM102 246h1v1h-1zM102 388h1v2h-1zM103 244h1v2h-1zM103 390h1v1h-1zM104 243h1v1h-1zM104 391h1v2h-1zM105 241h1v2h-1zM105 393h1v1h-1zM106 240h1v1h-1zM106 394h1v1h-1zM107 238h1v2h-1zM107 395h1v2h-1zM108 237h1v1h-1zM108 397h1v1h-1zM109 236h1v1h-1zM109 398h1v1h-1zM110 235h1v1h-1zM110 399h1v2h-1zM111 233h1v2h-1zM111 401h1v1h-1zM112 232h1v1h-1zM112 402h1v1h-1zM113 231h1v1h-1zM113 403h1v1h-1zM114 230h1v1h-1zM114 404h1v1h-1zM115 229h1v1h-1zM115 405h1v1h-1zM116 228h1v1h-1zM116 406h1v1h-1zM117 227h1v1h-1zM117 407h1v2h-1zM118 226h1v1h-1zM118 409h1v1h-1zM119 225h1v1h-1zM119 410h1v1h-1zM120 224h1v1h-1zM120 411h1v1h-1zM121 223h1v1h-1zM121 412h1v1h-1zM122 222h1v1h-1zM123 221h1v1h-1zM124 220h1v1h-1zM124 414h1v1h-1zM125 219h1v1h-1zM125 415h1v1h-1zM126 218h1v1h-1zM126 416h1v1h-1zM127 217h1v1h-1zM127 417h1v1h-1zM128 216h1v1h-1zM128 418h1v1h-1zM129 419h1v1h-1zM131 214h1v1h-1zM132 213h1v1h-1zM132 421h1v1h-1zM133 422h1v1h-1zM135 211h1v1h-1zM136 210h1v1h-1zM136 424h1v1h-1zM137 425h1v1h-1zM139 208h1v1h-1zM140 427h1v1h-1zM142 206h1v1h-1zM145 430h1v1h-1zM147 203h1v1h-1zM152 434h1v1h-1zM279 203h1v1h-1zM281 430h1v1h-1zM284 206h1v1h-1zM284 428h1v1h-1zM287 208h1v1h-1zM287 426h1v1h-1zM290 210h1v1h-1zM290 424h1v1h-1zM291 211h1v1h-1zM293 422h1v1h-1zM294 213h1v1h-1zM294 421h1v1h-1zM295 214h1v1h-1zM295 420h1v1h-1zM296 215h1v1h-1zM298 418h1v1h-1zM299 217h1v1h-1zM299 417h1v1h-1zM300 218h1v1h-1zM300 416h1v1h-1zM301 219h1v1h-1zM301 415h1v1h-1zM302 220h1v1h-1zM302 414h1v1h-1zM303 221h1v1h-1zM303 413h1v1h-1zM304 222h1v1h-1zM304 412h1v1h-1zM305 223h1v1h-1zM305 411h1v1h-1zM306 224h1v1h-1zM306 410h1v1h-1zM307 225h1v1h-1zM307 409h1v1h-1zM308 226h1v1h-1zM308 408h1v1h-1zM309 227h1v1h-1zM309 407h1v1h-1zM310 228h1v1h-1zM310 406h1v1h-1zM311 229h1v1h-1zM311 405h1v1h-1zM312 230h1v1h-1zM312 404h1v1h-1zM313 231h1v1h-1zM313 403h1v1h-1zM314 232h1v2h-1zM314 402h1v1h-1zM315 234h1v1h-1zM315 400h1v2h-1zM316 235h1v1h-1zM316 399h1v1h-1zM317 236h1v1h-1zM317 398h1v1h-1zM318 237h1v2h-1zM318 396h1v2h-1zM319 239h1v1h-1zM319 395h1v1h-1zM320 240h1v1h-1zM320 394h1v1h-1zM321 241h1v2h-1zM321 392h1v2h-1zM322 243h1v1h-1zM322 391h1v1h-1zM323 244h1v2h-1zM323 389h1v2h-1zM324 246h1v1h-1zM324 388h1v1h-1zM325 247h1v2h-1zM325 386h1v2h-1zM326 249h1v2h-1zM326 384h1v2h-1zM327 251h1v1h-1zM327 383h1v1h-1zM328 252h1v2h-1zM328 381h1v2h-1zM329 254h1v2h-1zM329 379h1v2h-1zM330 256h1v2h-1zM330 377h1v2h-1zM331 258h1v2h-1zM331 375h1v2h-1zM332 260h1v2h-1zM332 373h1v2h-1zM333 262h1v2h-1zM333 371h1v2h-1zM334 264h1v3h-1zM334 368h1v3h-1zM335 267h1v2h-1zM335 366h1v2h-1zM336 269h1v3h-1zM336 363h1v3h-1zM337 272h1v3h-1zM337 361h1v2h-1zM338 275h1v3h-1zM338 358h1v3h-1zM339 278h1v3h-1zM339 354h1v4h-1zM340 281h1v4h-1zM340 351h1v3h-1zM341 285h1v4h-1zM341 346h1v5h-1zM342 289h1v5h-1zM342 342h1v4h-1zM343 294h1v6h-1zM343 335h1v7h-1zM344 300h1v10h-1zM344 325h1v10h-1zM345 310h1v15h-1zM209 234h8v1h-8zM200 235h9v1h-9zM217 235h10v1h-10zM195 236h5v1h-5zM227 236h5v1h-5zM191 237h4v1h-4zM232 237h4v1h-4zM188 238h3v1h-3zM236 238h3v1h-3zM185 239h3v1h-3zM239 239h3v1h-3zM182 240h3v1h-3zM242 240h3v1h-3zM180 241h2v1h-2zM245 241h2v1h-2zM178 242h2v1h-2zM247 242h2v1h-2zM176 243h2v1h-2zM249 243h2v1h-2zM174 244h2v1h-2zM251 244h2v1h-2zM172 245h2v1h-2zM253 245h2v1h-2zM170 246h2v1h-2zM256 247h2v1h-2zM167 248h2v1h-2zM258 248h2v1h-2zM164 250h2v1h-2zM262 251h2v1h-2zM159 254h2v1h-2zM267 255h2v1h-2zM160 381h2v1h-2zM265 381h2v1h-2zM261 384h2v1h-2zM165 385h2v1h-2zM258 386h2v1h-2zM168 387h2v1h-2zM170 388h2v1h-2zM255 388h2v1h-2zM253 389h2v1h-2zM173 390h2v1h-2zM175 391h2v1h-2zM250 391h2v1h-2zM177 392h2v1h-2zM247 392h3v1h-3zM179 393h3v1h-3zM245 393h2v1h-2zM182 394h2v1h-2zM243 394h2v1h-2zM184 395h3v1h-3zM240 395h3v1h-3zM187 396h3v1h-3zM237 396h3v1h-3zM190 397h4v1h-4zM233 397h4v1h-4zM194 398h5v1h-5zM228 398h5v1h-5zM199 399h7v1h-7zM220 399h8v1h-8zM206 400h14v1h-14zM130 311h1v14h-1zM131 303h1v8h-1zM131 325h1v7h-1zM132 298h1v5h-1zM132 332h1v5h-1zM133 294h1v4h-1zM133 337h1v4h-1zM134 291h1v3h-1zM134 341h1v3h-1zM135 288h1v3h-1zM135 344h1v3h-1zM136 286h1v2h-1zM136 347h1v2h-1zM137 284h1v2h-1zM137 349h1v3h-1zM138 281h1v3h-1zM138 352h1v2h-1zM139 279h1v2h-1zM139 354h1v2h-1zM140 278h1v1h-1zM140 356h1v2h-1zM141 276h1v2h-1zM141 358h1v1h-1zM142 274h1v2h-1zM142 359h1v2h-1zM143 273h1v1h-1zM143 361h1v2h-1zM144 271h1v2h-1zM144 363h1v1h-1zM145 270h1v1h-1zM145 364h1v2h-1zM146 268h1v2h-1zM146 366h1v1h-1zM147 267h1v1h-1zM147 367h1v1h-1zM148 266h1v1h-1zM148 368h1v1h-1zM149 264h1v2h-1zM149 369h1v2h-1zM150 263h1v1h-1zM150 371h1v1h-1zM151 262h1v1h-1zM151 372h1v1h-1zM152 261h1v1h-1zM152 373h1v1h-1zM153 260h1v1h-1zM153 374h1v1h-1zM154 259h1v1h-1zM154 375h1v1h-1zM155 258h1v1h-1zM155 376h1v1h-1zM156 257h1v1h-1zM156 377h1v1h-1zM157 256h1v1h-1zM157 378h1v1h-1zM158 255h1v1h-1zM158 379h1v1h-1zM159 380h1v1h-1zM161 253h1v1h-1zM162 252h1v1h-1zM162 382h1v1h-1zM163 251h1v1h-1zM163 383h1v1h-1zM164 384h1v1h-1zM166 249h1v1h-1zM167 386h1v1h-1zM169 247h1v1h-1zM172 389h1v1h-1zM252 390h1v1h-1zM255 246h1v1h-1zM257 387h1v1h-1zM260 249h1v1h-1zM260 385h1v1h-1zM261 250h1v1h-1zM263 383h1v1h-1zM264 252h1v1h-1zM264 382h1v1h-1zM265 253h1v1h-1zM266 254h1v1h-1zM267 380h1v1h-1zM268 379h1v1h-1zM269 256h1v1h-1zM269 378h1v1h-1zM270 257h1v1h-1zM270 377h1v1h-1zM271 258h1v1h-1zM271 376h1v1h-1zM272 259h1v1h-1zM272 375h1v1h-1zM273 260h1v1h-1zM273 374h1v1h-1zM274 261h1v1h-1zM274 373h1v1h-1zM275 262h1v2h-1zM275 372h1v1h-1zM276 264h1v1h-1zM276 370h1v2h-1zM277 265h1v1h-1zM277 369h1v1h-1zM278 266h1v1h-1zM278 368h1v1h-1zM279 267h1v2h-1zM279 367h1v1h-1zM280 269h1v1h-1zM280 365h1v2h-1zM281 270h1v1h-1zM281 364h1v1h-1zM282 271h1v2h-1zM282 362h1v2h-1zM283 273h1v2h-1zM283 361h1v1h-1zM284 275h1v1h-1zM284 359h1v2h-1zM285 276h1v2h-1zM285 357h1v2h-1zM286 278h1v2h-1zM286 355h1v2h-1zM287 280h1v2h-1zM287 353h1v2h-1zM288 282h1v2h-1zM288 351h1v2h-1zM289 284h1v2h-1zM289 349h1v2h-1zM290 286h1v3h-1zM290 346h1v3h-1zM291 289h1v3h-1zM291 343h1v3h-1zM292 292h1v3h-1zM292 340h1v3h-1zM293 295h1v4h-1zM293 336h1v4h-1zM294 299h1v5h-1zM294 331h1v5h-1zM295 304h1v10h-1zM295 322h1v9h-1zM296 314h1v8h-1zM203 268h20v1h-20zM199 269h4v1h-4zM223 269h4v1h-4zM196 270h3v1h-3zM227 270h3v1h-3zM194 271h2v1h-2zM230 271h3v1h-3zM192 272h2v1h-2zM233 272h2v1h-2zM190 273h2v1h-2zM235 273h2v1h-2zM188 274h2v1h-2zM237 274h2v1h-2zM186 275h2v1h-2zM240 276h2v1h-2zM182 278h2v1h-2zM243 278h2v1h-2zM183 357h2v1h-2zM242 357h2v1h-2zM186 359h2v1h-2zM239 359h2v1h-2zM237 360h2v1h-2zM189 361h2v1h-2zM191 362h2v1h-2zM233 362h3v1h-3zM193 363h3v1h-3zM231 363h2v1h-2zM196 364h3v1h-3zM228 364h3v1h-3zM199 365h4v1h-4zM224 365h4v1h-4zM203 366h6v1h-6zM218 366h6v1h-6zM209 367h9v1h-9zM163 313h1v9h-1zM164 307h1v6h-1zM164 322h1v6h-1zM165 303h1v4h-1zM165 328h1v4h-1zM166 300h1v3h-1zM166 332h1v3h-1zM167 298h1v2h-1zM167 335h1v3h-1zM168 295h1v3h-1zM168 338h1v2h-1zM169 294h1v1h-1zM169 340h1v2h-1zM170 292h1v2h-1zM170 342h1v1h-1zM171 290h1v2h-1zM171 343h1v2h-1zM172 289h1v1h-1zM172 345h1v1h-1zM173 287h1v2h-1zM173 346h1v2h-1zM174 286h1v1h-1zM174 348h1v1h-1zM175 285h1v1h-1zM175 349h1v1h-1zM176 284h1v1h-1zM176 350h1v1h-1zM177 283h1v1h-1zM177 351h1v1h-1zM178 282h1v1h-1zM178 352h1v1h-1zM179 281h1v1h-1zM179 353h1v1h-1zM180 280h1v1h-1zM180 354h1v1h-1zM181 279h1v1h-1zM181 355h1v1h-1zM182 356h1v1h-1zM184 277h1v1h-1zM185 276h1v1h-1zM185 358h1v1h-1zM188 360h1v1h-1zM236 361h1v1h-1zM239 275h1v1h-1zM241 358h1v1h-1zM242 277h1v1h-1zM244 356h1v1h-1zM245 279h1v1h-1zM245 355h1v1h-1zM246 280h1v1h-1zM246 354h1v1h-1zM247 281h1v1h-1zM247 353h1v1h-1zM248 282h1v1h-1zM248 352h1v1h-1zM249 283h1v1h-1zM249 351h1v1h-1zM250 284h1v1h-1zM250 350h1v1h-1zM251 285h1v1h-1zM251 349h1v1h-1zM252 286h1v2h-1zM252 347h1v2h-1zM253 288h1v1h-1zM253 346h1v1h-1zM254 289h1v2h-1zM254 345h1v1h-1zM255 291h1v1h-1zM255 343h1v2h-1zM256 292h1v2h-1zM256 341h1v2h-1zM257 294h1v2h-1zM257 339h1v2h-1zM258 296h1v2h-1zM258 337h1v2h-1zM259 298h1v3h-1zM259 335h1v2h-1zM260 301h1v3h-1zM260 332h1v3h-1zM261 304h1v4h-1zM261 328h1v4h-1zM262 308h1v20h-1zM208 284h11v1h-11zM204 285h4v1h-4zM219 285h4v1h-4zM201 286h3v1h-3zM223 286h3v1h-3zM199 287h2v1h-2zM226 287h2v1h-2zM197 288h2v1h-2zM228 288h2v1h-2zM195 289h2v1h-2zM230 289h2v1h-2zM192 291h2v1h-2zM234 292h2v1h-2zM233 343h2v1h-2zM193 344h2v1h-2zM230 345h2v1h-2zM196 346h2v1h-2zM198 347h2v1h-2zM226 347h3v1h-3zM200 348h3v1h-3zM224 348h2v1h-2zM203 349h4v1h-4zM220 349h4v1h-4zM207 350h13v1h-13zM180 311h1v13h-1zM181 307h1v4h-1zM181 324h1v4h-1zM182 305h1v2h-1zM182 328h1v3h-1zM183 302h1v3h-1zM183 331h1v2h-1zM184 301h1v1h-1zM184 333h1v2h-1zM185 299h1v2h-1zM185 335h1v1h-1zM186 298h1v1h-1zM186 336h1v2h-1zM187 296h1v2h-1zM187 338h1v1h-1zM188 295h1v1h-1zM188 339h1v1h-1zM189 294h1v1h-1zM189 340h1v1h-1zM190 293h1v1h-1zM190 341h1v1h-1zM191 292h1v1h-1zM191 342h1v1h-1zM192 343h1v1h-1zM194 290h1v1h-1zM195 345h1v1h-1zM229 346h1v1h-1zM232 290h1v1h-1zM232 344h1v1h-1zM233 291h1v1h-1zM235 342h1v1h-1zM236 293h1v1h-1zM236 341h1v1h-1zM237 294h1v1h-1zM237 340h1v1h-1zM238 295h1v2h-1zM238 339h1v1h-1zM239 297h1v1h-1zM239 337h1v2h-1zM240 298h1v1h-1zM240 336h1v1h-1zM241 299h1v2h-1zM241 334h1v2h-1zM242 301h1v2h-1zM242 332h1v2h-1zM243 303h1v2h-1zM243 330h1v2h-1zM244 305h1v3h-1zM244 327h1v3h-1zM245 308h1v4h-1zM245 323h1v4h-1zM246 312h1v11h-1zM212 300h3v1h-3zM207 301h5v1h-5zM215 301h4v1h-4zM205 302h2v1h-2zM219 302h3v1h-3zM202 304h2v1h-2zM223 330h2v1h-2zM203 331h2v1h-2zM205 332h2v1h-2zM220 332h2v1h-2zM207 333h3v1h-3zM217 333h3v1h-3zM210 334h7v1h-7zM196 314h1v7h-1zM197 311h1v3h-1zM197 321h1v3h-1zM198 309h1v2h-1zM198 324h1v2h-1zM199 308h1v1h-1zM199 326h1v2h-1zM200 306h1v2h-1zM200 328h1v1h-1zM201 305h1v1h-1zM201 329h1v1h-1zM202 330h1v1h-1zM204 303h1v1h-1zM222 303h1v1h-1zM222 331h1v1h-1zM223 304h1v1h-1zM224 305h1v1h-1zM225 306h1v1h-1zM225 329h1v1h-1zM226 307h1v1h-1zM226 327h1v2h-1zM227 308h1v1h-1zM227 326h1v1h-1zM228 309h1v3h-1zM228 324h1v2h-1zM229 312h1v4h-1zM229 319h1v5h-1zM230 316h1v3h-1zM620 293h18v1h-18zM611 294h9v1h-9zM638 294h10v1h-10zM605 295h6v1h-6zM648 295h6v1h-6zM600 296h5v1h-5zM654 296h5v1h-5zM596 297h4v1h-4zM659 297h4v1h-4zM592 298h4v1h-4zM663 298h3v1h-3zM589 299h3v1h-3zM666 299h4v1h-4zM586 300h3v1h-3zM670 300h3v1h-3zM583 301h3v1h-3zM673 301h2v1h-2zM581 302h2v1h-2zM675 302h3v1h-3zM578 303h3v1h-3zM678 303h2v1h-2zM576 304h2v1h-2zM680 304h3v1h-3zM574 305h2v1h-2zM683 305h2v1h-2zM572 306h2v1h-2zM685 306h2v1h-2zM570 307h2v1h-2zM687 307h2v1h-2zM568 308h2v1h-2zM689 308h2v1h-2zM566 309h2v1h-2zM691 309h2v1h-2zM564 310h2v1h-2zM693 310h2v1h-2zM562 311h2v1h-2zM696 312h2v1h-2zM559 313h2v1h-2zM698 313h2v1h-2zM557 314h2v1h-2zM701 315h2v1h-2zM554 316h2v1h-2zM704 317h2v1h-2zM550 319h2v1h-2zM708 320h2v1h-2zM546 322h2v1h-2zM713 324h2v1h-2zM539 328h2v1h-2zM541 524h2v1h-2zM712 527h2v1h-2zM547 529h2v1h-2zM707 531h2v1h-2zM551 532h2v1h-2zM704 533h2v1h-2zM554 534h2v1h-2zM701 535h2v1h-2zM557 536h2v1h-2zM698 537h2v1h-2zM560 538h2v1h-2zM562 539h2v1h-2zM695 539h2v1h-2zM693 540h2v1h-2zM565 541h2v1h-2zM691 541h2v1h-2zM567 542h2v1h-2zM689 542h2v1h-2zM569 543h2v1h-2zM687 543h2v1h-2zM571 544h2v1h-2zM685 544h2v1h-2zM573 545h2v1h-2zM683 545h2v1h-2zM575 546h3v1h-3zM681 546h2v1h-2zM578 547h2v1h-2zM678 547h3v1h-3zM580 548h3v1h-3zM676 548h2v1h-2zM583 549h2v1h-2zM673 549h3v1h-3zM585 550h3v1h-3zM670 550h3v1h-3zM588 551h4v1h-4zM667 551h3v1h-3zM592 552h3v1h-3zM663 552h4v1h-4zM595 553h4v1h-4zM659 553h4v1h-4zM599 554h5v1h-5zM655 554h4v1h-4zM604 555h5v1h-5zM649 555h6v1h-6zM609 556h9v1h-9zM641 556h8v1h-8zM618 557h23v1h-23zM497 413h1v25h-1zM498 405h1v8h-1zM498 438h1v8h-1zM499 400h1v5h-1zM499 446h1v6h-1zM500 395h1v5h-1zM500 452h1v4h-1zM501 391h1v4h-1zM501 456h1v4h-1zM502 388h1v3h-1zM502 460h1v4h-1zM503 384h1v4h-1zM503 464h1v3h-1zM504 381h1v3h-1zM504 467h1v3h-1zM505 379h1v2h-1zM505 470h1v2h-1zM506 376h1v3h-1zM506 472h1v3h-1zM507 374h1v2h-1zM507 475h1v2h-1zM508 372h1v2h-1zM508 477h1v3h-1zM509 369h1v3h-1zM509 480h1v2h-1zM510 367h1v2h-1zM510 482h1v2h-1zM511 365h1v2h-1zM511 484h1v2h-1zM512 363h1v2h-1zM512 486h1v2h-1zM513 362h1v1h-1zM513 488h1v2h-1zM514 360h1v2h-1zM514 490h1v1h-1zM515 358h1v2h-1zM515 491h1v2h-1zM516 356h1v2h-1zM516 493h1v2h-1zM517 355h1v1h-1zM517 495h1v1h-1zM518 353h1v2h-1zM518 496h1v2h-1zM519 352h1v1h-1zM519 498h1v1h-1zM520 350h1v2h-1zM520 499h1v2h-1zM521 349h1v1h-1zM521 501h1v1h-1zM522 348h1v1h-1zM522 502h1v2h-1zM523 346h1v2h-1zM523 504h1v1h-1zM524 345h1v1h-1zM524 505h1v1h-1zM525 344h1v1h-1zM525 506h1v2h-1zM526 342h1v2h-1zM526 508h1v1h-1zM527 341h1v1h-1zM527 509h1v1h-1zM528 340h1v1h-1zM528 510h1v1h-1zM529 339h1v1h-1zM529 511h1v1h-1zM530 338h1v1h-1zM530 512h1v2h-1zM531 337h1v1h-1zM531 514h1v1h-1zM532 335h1v2h-1zM532 515h1v1h-1zM533 334h1v1h-1zM533 516h1v1h-1zM534 333h1v1h-1zM534 517h1v1h-1zM535 332h1v1h-1zM535 518h1v1h-1zM536 331h1v1h-1zM536 519h1v1h-1zM537 330h1v1h-1zM537 520h1v1h-1zM538 329h1v1h-1zM538 521h1v1h-1zM539 522h1v1h-1zM540 523h1v1h-1zM541 327h1v1h-1zM542 326h1v1h-1zM543 325h1v1h-1zM543 525h1v1h-1zM544 324h1v1h-1zM544 526h1v1h-1zM545 323h1v1h-1zM545 527h1v1h-1zM546 528h1v1h-1zM548 321h1v1h-1zM549 320h1v1h-1zM549 530h1v1h-1zM550 531h1v1h-1zM552 318h1v1h-1zM553 317h1v1h-1zM553 533h1v1h-1zM556 315h1v1h-1zM556 535h1v1h-1zM559 537h1v1h-1zM561 312h1v1h-1zM564 540h1v1h-1zM695 311h1v1h-1zM697 538h1v1h-1zM700 314h1v1h-1zM700 536h1v1h-1zM703 316h1v1h-1zM703 534h1v1h-1zM706 318h1v1h-1zM706 532h1v1h-1zM707 319h1v1h-1zM709 530h1v1h-1zM710 321h1v1h-1zM710 529h1v1h-1zM711 322h1v1h-1zM711 528h1v1h-1zM712 323h1v1h-1zM714 526h1v1h-1zM715 325h1v1h-1zM715 525h1v1h-1zM716 326h1v1h-1zM716 524h1v1h-1zM717 327h1v1h-1zM717 523h1v1h-1zM718 328h1v1h-1zM718 522h1v1h-1zM719 329h1v1h-1zM719 521h1v1h-1zM720 330h1v1h-1zM720 520h1v1h-1zM721 331h1v1h-1zM721 519h1v1h-1zM722 332h1v1h-1zM722 518h1v1h-1zM723 333h1v1h-1zM723 517h1v1h-1zM724 334h1v1h-1zM724 516h1v1h-1zM725 335h1v1h-1zM725 515h1v1h-1zM726 336h1v1h-1zM726 514h1v1h-1zM727 337h1v1h-1zM727 513h1v1h-1zM728 338h1v1h-1zM728 512h1v1h-1zM729 339h1v1h-1zM729 511h1v1h-1zM730 340h1v2h-1zM730 510h1v1h-1zM731 342h1v1h-1zM731 508h1v2h-1zM732 343h1v1h-1zM732 507h1v1h-1zM733 344h1v1h-1zM733 506h1v1h-1zM734 345h1v2h-1zM734 504h1v2h-1zM735 347h1v1h-1zM735 503h1v1h-1zM736 348h1v1h-1zM736 502h1v1h-1zM737 349h1v2h-1zM737 500h1v2h-1zM738 351h1v1h-1zM738 499h1v1h-1zM739 352h1v2h-1zM739 497h1v2h-1zM740 354h1v1h-1zM740 496h1v1h-1zM741 355h1v2h-1zM741 494h1v2h-1zM742 357h1v2h-1zM742 492h1v2h-1zM743 359h1v1h-1zM743 491h1v1h-1zM744 360h1v2h-1zM744 489h1v2h-1zM745 362h1v2h-1zM745 487h1v2h-1zM746 364h1v2h-1zM746 485h1v2h-1zM747 366h1v2h-1zM747 483h1v2h-1zM748 368h1v2h-1zM748 481h1v2h-1zM749 370h1v2h-1zM749 479h1v2h-1zM750 372h1v3h-1zM750 476h1v3h-1zM751 375h1v2h-1zM751 474h1v2h-1zM752 377h1v3h-1zM752 471h1v3h-1zM753 380h1v3h-1zM753 469h1v2h-1zM754 383h1v3h-1zM754 466h1v3h-1zM755 386h1v3h-1zM755 462h1v4h-1zM756 389h1v4h-1zM756 459h1v3h-1zM757 393h1v4h-1zM757 454h1v5h-1zM758 397h1v5h-1zM758 450h1v4h-1zM759 402h1v6h-1zM759 443h1v7h-1zM760 408h1v10h-1zM760 433h1v10h-1zM761 418h1v15h-1zM668 343h21v1h-21zM662 344h6v1h-6zM689 344h6v1h-6zM658 345h4v1h-4zM695 345h4v1h-4zM654 346h4v1h-4zM699 346h4v1h-4zM651 347h3v1h-3zM703 347h3v1h-3zM648 348h3v1h-3zM706 348h3v1h-3zM646 349h2v1h-2zM709 349h2v1h-2zM644 350h2v1h-2zM711 350h2v1h-2zM642 351h2v1h-2zM713 351h2v1h-2zM640 352h2v1h-2zM715 352h2v1h-2zM638 353h2v1h-2zM717 353h2v1h-2zM636 354h2v1h-2zM719 354h2v1h-2zM633 356h2v1h-2zM722 356h2v1h-2zM630 358h2v1h-2zM725 358h2v1h-2zM627 360h2v1h-2zM728 360h2v1h-2zM623 487h2v1h-2zM732 487h2v1h-2zM628 491h2v1h-2zM727 491h2v1h-2zM632 494h2v1h-2zM723 494h2v1h-2zM634 495h2v1h-2zM721 495h2v1h-2zM637 497h2v1h-2zM718 497h2v1h-2zM639 498h2v1h-2zM716 498h2v1h-2zM641 499h2v1h-2zM714 499h2v1h-2zM643 500h2v1h-2zM712 500h2v1h-2zM645 501h2v1h-2zM710 501h2v1h-2zM647 502h3v1h-3zM707 502h3v1h-3zM650 503h3v1h-3zM704 503h3v1h-3zM653 504h3v1h-3zM701 504h3v1h-3zM656 505h4v1h-4zM697 505h4v1h-4zM660 506h5v1h-5zM692 506h5v1h-5zM665 507h9v1h-9zM683 507h9v1h-9zM674 508h9v1h-9zM596 414h1v24h-1zM597 408h1v6h-1zM597 438h1v5h-1zM598 404h1v4h-1zM598 443h1v4h-1zM599 401h1v3h-1zM599 447h1v4h-1zM600 398h1v3h-1zM600 451h1v3h-1zM601 395h1v3h-1zM601 454h1v2h-1zM602 393h1v2h-1zM602 456h1v3h-1zM603 390h1v3h-1zM603 459h1v2h-1zM604 388h1v2h-1zM604 461h1v2h-1zM605 387h1v1h-1zM605 463h1v2h-1zM606 385h1v2h-1zM606 465h1v2h-1zM607 383h1v2h-1zM607 467h1v1h-1zM608 381h1v2h-1zM608 468h1v2h-1zM609 380h1v1h-1zM609 470h1v1h-1zM610 378h1v2h-1zM610 471h1v2h-1zM611 377h1v1h-1zM611 473h1v1h-1zM612 376h1v1h-1zM612 474h1v2h-1zM613 374h1v2h-1zM613 476h1v1h-1zM614 373h1v1h-1zM614 477h1v1h-1zM615 372h1v1h-1zM615 478h1v1h-1zM616 371h1v1h-1zM616 479h1v2h-1zM617 370h1v1h-1zM617 481h1v1h-1zM618 369h1v1h-1zM618 482h1v1h-1zM619 368h1v1h-1zM619 483h1v1h-1zM620 367h1v1h-1zM620 484h1v1h-1zM621 366h1v1h-1zM621 485h1v1h-1zM622 365h1v1h-1zM622 486h1v1h-1zM623 364h1v1h-1zM624 363h1v1h-1zM625 362h1v1h-1zM625 488h1v1h-1zM626 361h1v1h-1zM626 489h1v1h-1zM627 490h1v1h-1zM629 359h1v1h-1zM630 492h1v1h-1zM631 493h1v1h-1zM632 357h1v1h-1zM635 355h1v1h-1zM636 496h1v1h-1zM720 496h1v1h-1zM721 355h1v1h-1zM724 357h1v1h-1zM725 493h1v1h-1zM726 492h1v1h-1zM727 359h1v1h-1zM729 490h1v1h-1zM730 361h1v1h-1zM730 489h1v1h-1zM731 362h1v1h-1zM731 488h1v1h-1zM732 363h1v1h-1zM733 364h1v1h-1zM734 365h1v1h-1zM734 486h1v1h-1zM735 366h1v1h-1zM735 485h1v1h-1zM736 367h1v1h-1zM736 484h1v1h-1zM737 368h1v1h-1zM737 483h1v1h-1zM738 369h1v1h-1zM738 482h1v1h-1zM739 370h1v1h-1zM739 481h1v1h-1zM740 371h1v1h-1zM740 479h1v2h-1zM741 372h1v1h-1zM741 478h1v1h-1zM742 373h1v1h-1zM742 477h1v1h-1zM743 374h1v2h-1zM743 476h1v1h-1zM744 376h1v1h-1zM744 474h1v2h-1zM745 377h1v1h-1zM745 473h1v1h-1zM746 378h1v2h-1zM746 471h1v2h-1zM747 380h1v1h-1zM747 470h1v1h-1zM748 381h1v2h-1zM748 468h1v2h-1zM749 383h1v2h-1zM749 467h1v1h-1zM750 385h1v2h-1zM750 465h1v2h-1zM751 387h1v1h-1zM751 463h1v2h-1zM752 388h1v2h-1zM752 461h1v2h-1zM753 390h1v3h-1zM753 459h1v2h-1zM754 393h1v2h-1zM754 456h1v3h-1zM755 395h1v3h-1zM755 454h1v2h-1zM756 398h1v3h-1zM756 451h1v3h-1zM757 401h1v3h-1zM757 447h1v4h-1zM758 404h1v4h-1zM758 443h1v4h-1zM759 408h1v6h-1zM759 438h1v5h-1zM760 414h1v24h-1zM696 343h23v1h-23zM690 344h6v1h-6zM719 344h5v1h-5zM686 345h4v1h-4zM724 345h5v1h-5zM683 346h3v1h-3zM729 346h3v1h-3zM680 347h3v1h-3zM732 347h3v1h-3zM677 348h3v1h-3zM735 348h3v1h-3zM675 349h2v1h-2zM738 349h2v1h-2zM672 350h3v1h-3zM740 350h2v1h-2zM670 351h2v1h-2zM742 351h2v1h-2zM668 352h2v1h-2zM744 352h2v1h-2zM666 353h2v1h-2zM746 353h2v1h-2zM748 354h2v1h-2zM663 355h2v1h-2zM751 356h2v1h-2zM660 357h2v1h-2zM754 358h2v1h-2zM657 359h2v1h-2zM758 361h2v1h-2zM651 364h2v1h-2zM761 487h2v1h-2zM654 489h2v1h-2zM756 491h2v1h-2zM658 492h2v1h-2zM661 494h2v1h-2zM752 494h2v1h-2zM750 495h2v1h-2zM664 496h2v1h-2zM666 497h2v1h-2zM747 497h2v1h-2zM745 498h2v1h-2zM669 499h2v1h-2zM743 499h2v1h-2zM671 500h3v1h-3zM741 500h2v1h-2zM674 501h2v1h-2zM739 501h2v1h-2zM676 502h2v1h-2zM736 502h3v1h-3zM678 503h3v1h-3zM733 503h3v1h-3zM681 504h4v1h-4zM730 504h3v1h-3zM685 505h3v1h-3zM726 505h4v1h-4zM688 506h5v1h-5zM721 506h5v1h-5zM693 507h9v1h-9zM713 507h8v1h-8zM702 508h11v1h-11zM624 420h1v11h-1zM625 412h1v8h-1zM625 431h1v9h-1zM626 407h1v5h-1zM626 440h1v5h-1zM627 403h1v4h-1zM627 445h1v3h-1zM628 400h1v3h-1zM628 448h1v4h-1zM629 397h1v3h-1zM629 452h1v3h-1zM630 394h1v3h-1zM630 455h1v2h-1zM631 392h1v2h-1zM631 457h1v2h-1zM632 390h1v2h-1zM632 459h1v3h-1zM633 388h1v2h-1zM633 462h1v2h-1zM634 386h1v2h-1zM634 464h1v1h-1zM635 384h1v2h-1zM635 465h1v2h-1zM636 383h1v1h-1zM636 467h1v2h-1zM637 381h1v2h-1zM637 469h1v1h-1zM638 379h1v2h-1zM638 470h1v2h-1zM639 378h1v1h-1zM639 472h1v1h-1zM640 377h1v1h-1zM640 473h1v2h-1zM641 375h1v2h-1zM641 475h1v1h-1zM642 374h1v1h-1zM642 476h1v1h-1zM643 373h1v1h-1zM643 477h1v2h-1zM644 372h1v1h-1zM644 479h1v1h-1zM645 370h1v2h-1zM645 480h1v1h-1zM646 369h1v1h-1zM646 481h1v1h-1zM647 368h1v1h-1zM647 482h1v1h-1zM648 367h1v1h-1zM648 483h1v1h-1zM649 366h1v1h-1zM649 484h1v1h-1zM650 365h1v1h-1zM650 485h1v1h-1zM651 486h1v1h-1zM652 487h1v1h-1zM653 363h1v1h-1zM653 488h1v1h-1zM654 362h1v1h-1zM655 361h1v1h-1zM656 360h1v1h-1zM656 490h1v1h-1zM657 491h1v1h-1zM659 358h1v1h-1zM660 493h1v1h-1zM662 356h1v1h-1zM663 495h1v1h-1zM665 354h1v1h-1zM668 498h1v1h-1zM749 496h1v1h-1zM750 355h1v1h-1zM753 357h1v1h-1zM754 493h1v1h-1zM755 492h1v1h-1zM756 359h1v1h-1zM757 360h1v1h-1zM758 490h1v1h-1zM759 489h1v1h-1zM760 362h1v1h-1zM760 488h1v1h-1zM761 363h1v1h-1zM762 364h1v1h-1zM763 365h1v1h-1zM763 486h1v1h-1zM764 366h1v1h-1zM764 485h1v1h-1zM765 367h1v1h-1zM765 484h1v1h-1zM766 368h1v1h-1zM766 483h1v1h-1zM767 369h1v1h-1zM767 482h1v1h-1zM768 370h1v1h-1zM768 480h1v2h-1zM769 371h1v1h-1zM769 479h1v1h-1zM770 372h1v1h-1zM770 478h1v1h-1zM771 373h1v2h-1zM771 477h1v1h-1zM772 375h1v1h-1zM772 476h1v1h-1zM773 376h1v1h-1zM773 474h1v2h-1zM774 377h1v2h-1zM774 473h1v1h-1zM775 379h1v1h-1zM775 471h1v2h-1zM776 380h1v2h-1zM776 470h1v1h-1zM777 382h1v1h-1zM777 468h1v2h-1zM778 383h1v2h-1zM778 467h1v1h-1zM779 385h1v2h-1zM779 465h1v2h-1zM780 387h1v2h-1zM780 463h1v2h-1zM781 389h1v2h-1zM781 461h1v2h-1zM782 391h1v2h-1zM782 458h1v3h-1zM783 393h1v2h-1zM783 456h1v2h-1zM784 395h1v3h-1zM784 453h1v3h-1zM785 398h1v3h-1zM785 450h1v3h-1zM786 401h1v3h-1zM786 447h1v3h-1zM787 404h1v5h-1zM787 443h1v4h-1zM788 409h1v5h-1zM788 437h1v6h-1zM789 414h1v23h-1z"/>
  <!-- right circles -->
    <g id="xmarks"><path d="M212 317h2v2h-2z" fill="#111" stroke="none"/><path d="M211 316h1v1h-1zM214 316h1v1h-1zM211 319h1v1h-1zM214 319h1v1h-1z" fill="#4a4a4a" stroke="none"/><path d="M618.5 425h2v2h-2z" fill="#111" stroke="none"/><path d="M617.5 424h1v1h-1zM620.5 424h1v1h-1zM617.5 427h1v1h-1zM620.5 427h1v1h-1z" fill="#4a4a4a" stroke="none"/><path d="M678 425h2v2h-2z" fill="#111" stroke="none"/><path d="M677 424h1v1h-1zM680 424h1v1h-1zM677 427h1v1h-1zM680 427h1v1h-1z" fill="#4a4a4a" stroke="none"/><path d="M706.5 425h2v2h-2z" fill="#111" stroke="none"/><path d="M705.5 424h1v1h-1zM708.5 424h1v1h-1zM705.5 427h1v1h-1zM708.5 427h1v1h-1z" fill="#4a4a4a" stroke="none"/></g>
  <g fill="#ff4f4f" stroke="none">
    <rect x="495" y="423" width="5" height="5"/>
    <rect x="627" y="291" width="5" height="5"/>
    <rect x="627" y="554" width="5" height="5"/>
    <rect x="758" y="423" width="5" height="5"/>
    <rect x="627" y="423" width="5" height="5"/>
  </g>
</svg>
</div>
</body>
</html>
